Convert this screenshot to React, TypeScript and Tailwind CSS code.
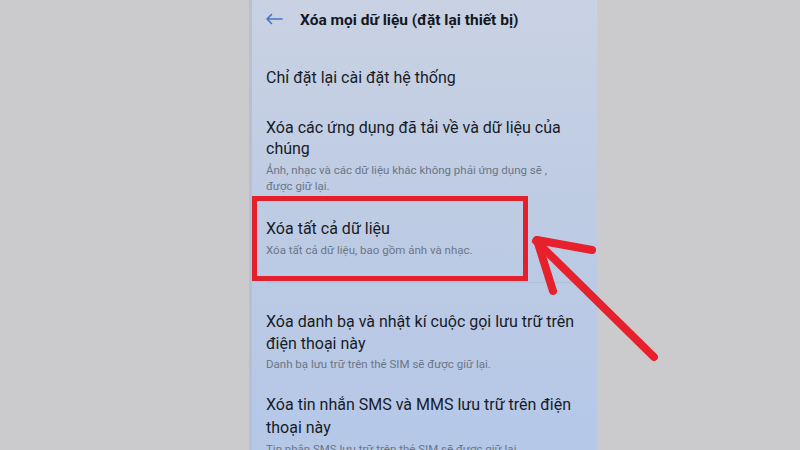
import React from "react";

const items = [
  { title: "Xóa các ứng dụng đã tải về và dữ liệu của chúng", sub: "Ảnh, nhạc và các dữ liệu khác không phải ứng dụng sẽ , được giữ lại." },
];

const App: React.FC = () => {
  return (
    <div
      className="relative flex h-[450px] w-[800px] overflow-hidden bg-[#cbcbcd]"
      style={{ fontFamily: "Roboto, 'Noto Sans', sans-serif" }}
    >
      <div className="w-[249px] shrink-0" />

      {/* màn hình điện thoại */}
      <div className="relative w-[348px] shrink-0 overflow-hidden border-l-[3px] border-[#b3c0d6] bg-gradient-to-b from-[#c9d2e3] via-[#bdcbe3] to-[#b5c8e8]">
        <div className="flex h-[40px] items-center pl-[13px]">
          <svg width="18" height="12" viewBox="0 0 18 12" className="mt-[-2px]">
            <path d="M17 6H2M6.5 1.5L2 6l4.5 4.5" fill="none" stroke="#4a72c9" strokeWidth="1.6" strokeLinecap="round" strokeLinejoin="round" />
          </svg>
          <span className="ml-[17px] text-[15.5px] font-bold leading-[21px] text-[#141821]">
            Xóa mọi dữ liệu (đặt lại thiết bị)
          </span>
        </div>

        <div className="w-[325px] pl-[14px] text-[#181c26]">
          <div className="mt-[27px] text-[16px] leading-[21px]">Chỉ đặt lại cài đặt hệ thống</div>

          {items.map((it) => (
            <div key={it.title} className="mt-[29px]">
              <div className="text-[16px] leading-[21px]">{it.title}</div>
              <div className="mt-[3px] pr-[4px] text-[11.5px] leading-[16px] text-[#6b7687]">{it.sub}</div>
            </div>
          ))}

          <div className="mt-[24px]">
            <div className="text-[16px] leading-[21px]">Xóa tất cả dữ liệu</div>
            <div className="mt-[3px] text-[11.5px] leading-[16px] text-[#6b7687]">
              Xóa tất cả dữ liệu, bao gồm ảnh và nhạc.
            </div>
          </div>
        </div>

        <div className="mt-[24px] ml-[14px] mr-[22px] h-px bg-[#b0c0d8]" />

        <div className="w-[325px] pl-[14px] text-[#181c26]">
          <div className="mt-[28px]">
            <div className="text-[16px] leading-[22px]">Xóa danh bạ và nhật kí cuộc gọi lưu trữ trên điện thoại này</div>
            <div className="mt-[1px] text-[11.5px] leading-[16px] text-[#6b7687]">
              Danh bạ lưu trữ trên thẻ SIM sẽ được giữ lại.
            </div>
          </div>
          <div className="mt-[21px]">
            <div className="text-[16px] leading-[23px]">Xóa tin nhắn SMS và MMS lưu trữ trên điện thoại này</div>
            <div className="mt-[2px] text-[11.5px] leading-[16px] text-[#6b7687]">
              Tin nhắn SMS lưu trữ trên thẻ SIM sẽ được giữ lại.
            </div>
          </div>
        </div>
      </div>

      <div className="flex-1" />

      {/* khung đỏ đánh dấu */}
      <div className="absolute left-[252px] top-[196px] h-[85px] w-[276px] border-[5px] border-[#e3202b]" />

      {/* mũi tên đỏ */}
      <svg className="absolute left-0 top-0" width="800" height="450" viewBox="0 0 800 450">
        <g fill="none" stroke="#e6212b" strokeWidth="8" strokeLinecap="round" strokeLinejoin="round">
          <path d="M536 241L654 357" />
          <path d="M592 250L537 240L553 291" />
        </g>
      </svg>
    </div>
  );
};

export default App;
